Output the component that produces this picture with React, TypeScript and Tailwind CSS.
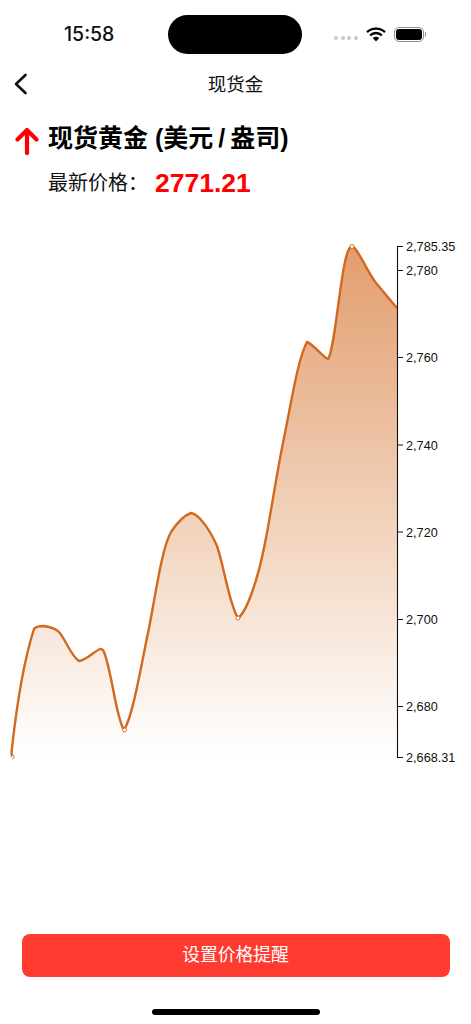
import React from 'react'

const FONT = "font-['Liberation_Sans','Noto_Sans_CJK_SC',sans-serif]"

const LINE =
  'M12 757 C12 754 11 752 12 748 C16 712 24 660 34 629 C36 626 40 626 44 626 C50 627 55 628 59 632 C66 640 71 656 79 661 C85 661 95 651 100 649 C102 649 103 649 104 652 C112 672 116 718 124 730 C133 716 141 666 149 628 C156 592 162 548 171 532 C177 523 185 515 191 513 C199 514 210 530 217 546 C224 566 229 604 238 618 C247 612 258 578 264 548 C270 520 276 476 284 438 C291 404 298 358 307 342 C313 344 323 357 328 359 C334 352 339 288 345 262 C347 252 349 247 352 246 C358 248 366 270 376 283 C383 291 390 300 397 308'

const TICKS = [
  { y: 246.5, label: '2,785.35' },
  { y: 270.5, label: '2,780' },
  { y: 357.5, label: '2,760' },
  { y: 445, label: '2,740' },
  { y: 532, label: '2,720' },
  { y: 619.5, label: '2,700' },
  { y: 706.5, label: '2,680' },
  { y: 757.5, label: '2,668.31' },
]

const DOTS = [
  [12, 757],
  [124.5, 730],
  [238, 618],
  [352, 246.5],
]

const Chart = () => (
  <svg width="471" height="560" viewBox="0 225 471 560" className="block">
    <defs>
      <linearGradient id="area" x1="0" y1="246" x2="0" y2="757" gradientUnits="userSpaceOnUse">
        <stop offset="0" stopColor="#d2691e" stopOpacity="0.65" />
        <stop offset="1" stopColor="#d2691e" stopOpacity="0" />
      </linearGradient>
      <clipPath id="plot">
        <rect x="12" y="225" width="386" height="560" />
      </clipPath>
    </defs>
    <path d={`${LINE} L397 757.5 L12 757.5 Z`} fill="url(#area)" />
    <path d={LINE} fill="none" stroke="#d2691e" strokeWidth="2.4" />
    <g clipPath="url(#plot)">
      {DOTS.map(([x, y]) => (
        <circle key={x} cx={x} cy={y} r="2" fill="#fff" stroke="#d2691e" strokeWidth="0.9" />
      ))}
    </g>
    <line x1="397.5" y1="246" x2="397.5" y2="758" stroke="#111" strokeWidth="1.1" />
    {TICKS.map((t) => (
      <g key={t.label}>
        <line x1="398" y1={t.y} x2="403" y2={t.y} stroke="#111" strokeWidth="1" />
        <text x="406" y={t.y + 4.5} fontSize="12.7" fill="#111" fontFamily="'Liberation Sans', sans-serif">
          {t.label}
        </text>
      </g>
    ))}
  </svg>
)

const StatusBar = () => (
  <div className="flex h-[68px] items-center pt-[1px]">
    <div className="w-[168px] pl-[64px] pt-[1px] font-['Inter',sans-serif] text-[19.5px] font-medium text-[#111]">15:58</div>
    <div className="h-[39px] w-[134px] rounded-[20px] bg-black" />
    <div className="flex items-center pl-[32px]">
      <div className="flex gap-[2.5px] pt-[6px]">
        <span className="h-[4px] w-[4px] rounded-full bg-[#c9c9c9]" />
        <span className="h-[4px] w-[4px] rounded-full bg-[#c9c9c9]" />
        <span className="h-[4px] w-[4px] rounded-full bg-[#c9c9c9]" />
        <span className="h-[4px] w-[4px] rounded-full bg-[#c9c9c9]" />
      </div>
      <svg width="20" height="15" viewBox="0 0 20 15" className="ml-[8px]">
        <path d="M1 5.2 C6 0.4 14 0.4 19 5.2" fill="none" stroke="#000" strokeWidth="2.3" />
        <path d="M4.2 8.4 C7.6 5.2 12.4 5.2 15.8 8.4" fill="none" stroke="#000" strokeWidth="2.3" />
        <path d="M6.8 11 L10 14.4 L13.2 11 C11.4 9.4 8.6 9.4 6.8 11 Z" fill="#000" />
      </svg>
      <div className="ml-[8px] flex items-center">
        <div className="flex h-[15px] w-[30px] items-center justify-center rounded-[5px] border border-[#8e8e8e]">
          <div className="h-[11px] w-[26px] rounded-[3px] bg-black" />
        </div>
        <div className="ml-[1px] h-[5px] w-[1.5px] rounded-r-sm bg-[#8e8e8e]" />
      </div>
    </div>
  </div>
)

export default function App() {
  return (
    <div className={`flex h-[1024px] w-[471px] flex-col overflow-hidden bg-white ${FONT} text-[#111]`}>
      <StatusBar />
      <div className="relative flex h-[32px] items-center justify-center pt-[2px]">
        <svg width="16" height="24" viewBox="0 0 16 24" className="absolute left-[13px] top-[4px]">
          <path d="M12.5 3 L3 12 L12.5 21" fill="none" stroke="#111" strokeWidth="2.6" strokeLinecap="round" strokeLinejoin="round" />
        </svg>
        <span className="text-[18.5px] leading-none">现货金</span>
      </div>
      <div className="mt-[20px] flex h-[36px] items-center pl-[15px]">
        <svg width="26" height="32" viewBox="0 0 26 32" className="mt-[1px]">
          <path d="M12 30 L12 7 M2.5 16.5 L12 7 L21.5 16.5" fill="none" stroke="#ff0000" strokeWidth="4.2" strokeLinecap="round" strokeLinejoin="round" />
        </svg>
        <span className="ml-[7px] flex items-center text-[25px] font-bold leading-none text-black">
          现货黄金 (美元<span className="mx-[5px]">/</span>盎司)
        </span>
      </div>
      <div className="mt-[9px] flex h-[36px] items-center pl-[48px]">
        <span className="text-[20px] leading-none">最新价格：</span>
        <span className="ml-[7px] text-[26.5px] font-bold leading-none text-[#ff0000]">2771.21</span>
      </div>
      <div className="mt-[24px]">
        <Chart />
      </div>
      <div className="mt-[149px] flex justify-center">
        <button
          type="button"
          className="h-[43px] w-[428px] rounded-[8px] bg-[#ff3b30] pt-[1px] text-[17.8px] leading-none text-white"
        >
          设置价格提醒
        </button>
      </div>
      <div className="mt-[32px] flex justify-center">
        <div className="h-[6px] w-[168px] rounded-full bg-black" />
      </div>
    </div>
  )
}
